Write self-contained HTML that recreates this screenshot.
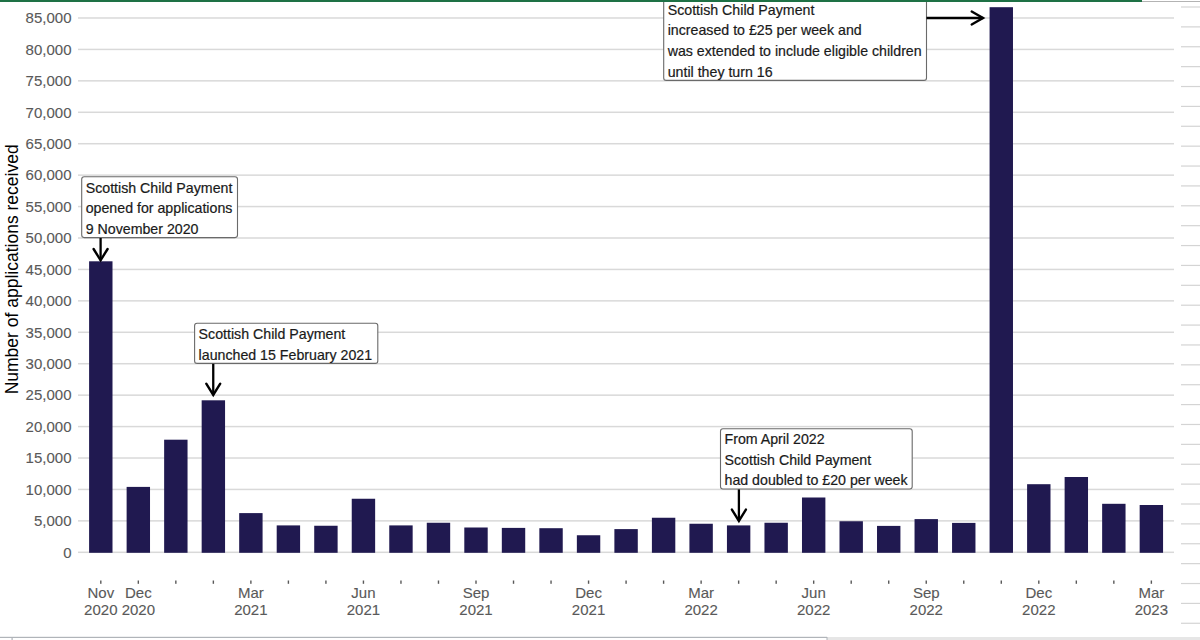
<!DOCTYPE html><html><head><meta charset="utf-8"><style>html,body{margin:0;padding:0;background:#fff;overflow:hidden}svg{display:block}text{font-family:"Liberation Sans",sans-serif}</style></head><body>
<svg width="1200" height="640" viewBox="0 0 1200 640">
<rect x="0" y="0" width="1200" height="640" fill="#fff"/>
<rect x="1181" y="6.40" width="19" height="1.2" fill="#d4d4d4"/>
<rect x="1181" y="26.28" width="19" height="1.2" fill="#d4d4d4"/>
<rect x="1181" y="46.16" width="19" height="1.2" fill="#d4d4d4"/>
<rect x="1181" y="66.04" width="19" height="1.2" fill="#d4d4d4"/>
<rect x="1181" y="85.92" width="19" height="1.2" fill="#d4d4d4"/>
<rect x="1181" y="105.80" width="19" height="1.2" fill="#d4d4d4"/>
<rect x="1181" y="125.68" width="19" height="1.2" fill="#d4d4d4"/>
<rect x="1181" y="145.56" width="19" height="1.2" fill="#d4d4d4"/>
<rect x="1181" y="165.44" width="19" height="1.2" fill="#d4d4d4"/>
<rect x="1181" y="185.32" width="19" height="1.2" fill="#d4d4d4"/>
<rect x="1181" y="205.20" width="19" height="1.2" fill="#d4d4d4"/>
<rect x="1181" y="225.08" width="19" height="1.2" fill="#d4d4d4"/>
<rect x="1181" y="244.96" width="19" height="1.2" fill="#d4d4d4"/>
<rect x="1181" y="264.84" width="19" height="1.2" fill="#d4d4d4"/>
<rect x="1181" y="284.72" width="19" height="1.2" fill="#d4d4d4"/>
<rect x="1181" y="304.60" width="19" height="1.2" fill="#d4d4d4"/>
<rect x="1181" y="324.48" width="19" height="1.2" fill="#d4d4d4"/>
<rect x="1181" y="344.36" width="19" height="1.2" fill="#d4d4d4"/>
<rect x="1181" y="364.24" width="19" height="1.2" fill="#d4d4d4"/>
<rect x="1181" y="384.12" width="19" height="1.2" fill="#d4d4d4"/>
<rect x="1181" y="404.00" width="19" height="1.2" fill="#d4d4d4"/>
<rect x="1181" y="423.88" width="19" height="1.2" fill="#d4d4d4"/>
<rect x="1181" y="443.76" width="19" height="1.2" fill="#d4d4d4"/>
<rect x="1181" y="463.64" width="19" height="1.2" fill="#d4d4d4"/>
<rect x="1181" y="483.52" width="19" height="1.2" fill="#d4d4d4"/>
<rect x="1181" y="503.40" width="19" height="1.2" fill="#d4d4d4"/>
<rect x="1181" y="523.28" width="19" height="1.2" fill="#d4d4d4"/>
<rect x="1181" y="543.16" width="19" height="1.2" fill="#d4d4d4"/>
<rect x="1181" y="563.04" width="19" height="1.2" fill="#d4d4d4"/>
<rect x="1181" y="582.92" width="19" height="1.2" fill="#d4d4d4"/>
<rect x="1181" y="602.80" width="19" height="1.2" fill="#d4d4d4"/>
<rect x="1181" y="622.68" width="19" height="1.2" fill="#d4d4d4"/>
<rect x="78" y="551.55" width="1096" height="1.5" fill="#d9d9d9"/>
<rect x="78" y="520.12" width="1096" height="1.5" fill="#d9d9d9"/>
<rect x="78" y="488.69" width="1096" height="1.5" fill="#d9d9d9"/>
<rect x="78" y="457.26" width="1096" height="1.5" fill="#d9d9d9"/>
<rect x="78" y="425.83" width="1096" height="1.5" fill="#d9d9d9"/>
<rect x="78" y="394.40" width="1096" height="1.5" fill="#d9d9d9"/>
<rect x="78" y="362.97" width="1096" height="1.5" fill="#d9d9d9"/>
<rect x="78" y="331.54" width="1096" height="1.5" fill="#d9d9d9"/>
<rect x="78" y="300.11" width="1096" height="1.5" fill="#d9d9d9"/>
<rect x="78" y="268.68" width="1096" height="1.5" fill="#d9d9d9"/>
<rect x="78" y="237.25" width="1096" height="1.5" fill="#d9d9d9"/>
<rect x="78" y="205.82" width="1096" height="1.5" fill="#d9d9d9"/>
<rect x="78" y="174.39" width="1096" height="1.5" fill="#d9d9d9"/>
<rect x="78" y="142.96" width="1096" height="1.5" fill="#d9d9d9"/>
<rect x="78" y="111.53" width="1096" height="1.5" fill="#d9d9d9"/>
<rect x="78" y="80.10" width="1096" height="1.5" fill="#d9d9d9"/>
<rect x="78" y="48.67" width="1096" height="1.5" fill="#d9d9d9"/>
<rect x="78" y="17.24" width="1096" height="1.5" fill="#d9d9d9"/>
<text x="71.5" y="557.60" font-size="15" fill="#595959" stroke="#595959" stroke-width="0.12" text-anchor="end">0</text>
<text x="71.5" y="526.17" font-size="15" fill="#595959" stroke="#595959" stroke-width="0.12" text-anchor="end">5,000</text>
<text x="71.5" y="494.74" font-size="15" fill="#595959" stroke="#595959" stroke-width="0.12" text-anchor="end">10,000</text>
<text x="71.5" y="463.31" font-size="15" fill="#595959" stroke="#595959" stroke-width="0.12" text-anchor="end">15,000</text>
<text x="71.5" y="431.88" font-size="15" fill="#595959" stroke="#595959" stroke-width="0.12" text-anchor="end">20,000</text>
<text x="71.5" y="400.45" font-size="15" fill="#595959" stroke="#595959" stroke-width="0.12" text-anchor="end">25,000</text>
<text x="71.5" y="369.02" font-size="15" fill="#595959" stroke="#595959" stroke-width="0.12" text-anchor="end">30,000</text>
<text x="71.5" y="337.59" font-size="15" fill="#595959" stroke="#595959" stroke-width="0.12" text-anchor="end">35,000</text>
<text x="71.5" y="306.16" font-size="15" fill="#595959" stroke="#595959" stroke-width="0.12" text-anchor="end">40,000</text>
<text x="71.5" y="274.73" font-size="15" fill="#595959" stroke="#595959" stroke-width="0.12" text-anchor="end">45,000</text>
<text x="71.5" y="243.30" font-size="15" fill="#595959" stroke="#595959" stroke-width="0.12" text-anchor="end">50,000</text>
<text x="71.5" y="211.87" font-size="15" fill="#595959" stroke="#595959" stroke-width="0.12" text-anchor="end">55,000</text>
<text x="71.5" y="180.44" font-size="15" fill="#595959" stroke="#595959" stroke-width="0.12" text-anchor="end">60,000</text>
<text x="71.5" y="149.01" font-size="15" fill="#595959" stroke="#595959" stroke-width="0.12" text-anchor="end">65,000</text>
<text x="71.5" y="117.58" font-size="15" fill="#595959" stroke="#595959" stroke-width="0.12" text-anchor="end">70,000</text>
<text x="71.5" y="86.15" font-size="15" fill="#595959" stroke="#595959" stroke-width="0.12" text-anchor="end">75,000</text>
<text x="71.5" y="54.72" font-size="15" fill="#595959" stroke="#595959" stroke-width="0.12" text-anchor="end">80,000</text>
<text x="71.5" y="23.29" font-size="15" fill="#595959" stroke="#595959" stroke-width="0.12" text-anchor="end">85,000</text>
<text transform="translate(18,269.35) rotate(-90)" x="0" y="0" font-size="17.5" fill="#000" text-anchor="middle">Number of applications received</text>
<rect x="89.10" y="261.30" width="23.4" height="291.50" fill="#201950"/>
<rect x="126.62" y="486.90" width="23.4" height="65.90" fill="#201950"/>
<rect x="164.14" y="439.70" width="23.4" height="113.10" fill="#201950"/>
<rect x="201.66" y="400.30" width="23.4" height="152.50" fill="#201950"/>
<rect x="239.18" y="513.10" width="23.4" height="39.70" fill="#201950"/>
<rect x="276.70" y="525.40" width="23.4" height="27.40" fill="#201950"/>
<rect x="314.22" y="525.75" width="23.4" height="27.05" fill="#201950"/>
<rect x="351.74" y="498.75" width="23.4" height="54.05" fill="#201950"/>
<rect x="389.26" y="525.40" width="23.4" height="27.40" fill="#201950"/>
<rect x="426.78" y="522.75" width="23.4" height="30.05" fill="#201950"/>
<rect x="464.30" y="527.50" width="23.4" height="25.30" fill="#201950"/>
<rect x="501.82" y="527.90" width="23.4" height="24.90" fill="#201950"/>
<rect x="539.34" y="528.20" width="23.4" height="24.60" fill="#201950"/>
<rect x="576.86" y="535.25" width="23.4" height="17.55" fill="#201950"/>
<rect x="614.38" y="529.10" width="23.4" height="23.70" fill="#201950"/>
<rect x="651.90" y="517.75" width="23.4" height="35.05" fill="#201950"/>
<rect x="689.42" y="523.75" width="23.4" height="29.05" fill="#201950"/>
<rect x="726.94" y="525.40" width="23.4" height="27.40" fill="#201950"/>
<rect x="764.46" y="522.75" width="23.4" height="30.05" fill="#201950"/>
<rect x="801.98" y="497.50" width="23.4" height="55.30" fill="#201950"/>
<rect x="839.50" y="521.25" width="23.4" height="31.55" fill="#201950"/>
<rect x="877.02" y="525.90" width="23.4" height="26.90" fill="#201950"/>
<rect x="914.54" y="519.10" width="23.4" height="33.70" fill="#201950"/>
<rect x="952.06" y="522.90" width="23.4" height="29.90" fill="#201950"/>
<rect x="989.58" y="7.20" width="23.4" height="545.60" fill="#201950"/>
<rect x="1027.10" y="484.20" width="23.4" height="68.60" fill="#201950"/>
<rect x="1064.62" y="477.00" width="23.4" height="75.80" fill="#201950"/>
<rect x="1102.14" y="503.80" width="23.4" height="49.00" fill="#201950"/>
<rect x="1139.66" y="505.00" width="23.4" height="47.80" fill="#201950"/>
<rect x="100.10" y="580.5" width="1.4" height="3.3" fill="#595959"/>
<rect x="137.62" y="580.5" width="1.4" height="3.3" fill="#595959"/>
<rect x="175.14" y="580.5" width="1.4" height="3.3" fill="#595959"/>
<rect x="212.66" y="580.5" width="1.4" height="3.3" fill="#595959"/>
<rect x="250.18" y="580.5" width="1.4" height="3.3" fill="#595959"/>
<rect x="287.70" y="580.5" width="1.4" height="3.3" fill="#595959"/>
<rect x="325.22" y="580.5" width="1.4" height="3.3" fill="#595959"/>
<rect x="362.74" y="580.5" width="1.4" height="3.3" fill="#595959"/>
<rect x="400.26" y="580.5" width="1.4" height="3.3" fill="#595959"/>
<rect x="437.78" y="580.5" width="1.4" height="3.3" fill="#595959"/>
<rect x="475.30" y="580.5" width="1.4" height="3.3" fill="#595959"/>
<rect x="512.82" y="580.5" width="1.4" height="3.3" fill="#595959"/>
<rect x="550.34" y="580.5" width="1.4" height="3.3" fill="#595959"/>
<rect x="587.86" y="580.5" width="1.4" height="3.3" fill="#595959"/>
<rect x="625.38" y="580.5" width="1.4" height="3.3" fill="#595959"/>
<rect x="662.90" y="580.5" width="1.4" height="3.3" fill="#595959"/>
<rect x="700.42" y="580.5" width="1.4" height="3.3" fill="#595959"/>
<rect x="737.94" y="580.5" width="1.4" height="3.3" fill="#595959"/>
<rect x="775.46" y="580.5" width="1.4" height="3.3" fill="#595959"/>
<rect x="812.98" y="580.5" width="1.4" height="3.3" fill="#595959"/>
<rect x="850.50" y="580.5" width="1.4" height="3.3" fill="#595959"/>
<rect x="888.02" y="580.5" width="1.4" height="3.3" fill="#595959"/>
<rect x="925.54" y="580.5" width="1.4" height="3.3" fill="#595959"/>
<rect x="963.06" y="580.5" width="1.4" height="3.3" fill="#595959"/>
<rect x="1000.58" y="580.5" width="1.4" height="3.3" fill="#595959"/>
<rect x="1038.10" y="580.5" width="1.4" height="3.3" fill="#595959"/>
<rect x="1075.62" y="580.5" width="1.4" height="3.3" fill="#595959"/>
<rect x="1113.14" y="580.5" width="1.4" height="3.3" fill="#595959"/>
<rect x="1150.66" y="580.5" width="1.4" height="3.3" fill="#595959"/>
<text x="100.80" y="598.2" font-size="15" fill="#595959" stroke="#595959" stroke-width="0.12" text-anchor="middle">Nov</text>
<text x="100.80" y="614.8" font-size="15" fill="#595959" stroke="#595959" stroke-width="0.12" text-anchor="middle">2020</text>
<text x="138.32" y="598.2" font-size="15" fill="#595959" stroke="#595959" stroke-width="0.12" text-anchor="middle">Dec</text>
<text x="138.32" y="614.8" font-size="15" fill="#595959" stroke="#595959" stroke-width="0.12" text-anchor="middle">2020</text>
<text x="250.88" y="598.2" font-size="15" fill="#595959" stroke="#595959" stroke-width="0.12" text-anchor="middle">Mar</text>
<text x="250.88" y="614.8" font-size="15" fill="#595959" stroke="#595959" stroke-width="0.12" text-anchor="middle">2021</text>
<text x="363.44" y="598.2" font-size="15" fill="#595959" stroke="#595959" stroke-width="0.12" text-anchor="middle">Jun</text>
<text x="363.44" y="614.8" font-size="15" fill="#595959" stroke="#595959" stroke-width="0.12" text-anchor="middle">2021</text>
<text x="476.00" y="598.2" font-size="15" fill="#595959" stroke="#595959" stroke-width="0.12" text-anchor="middle">Sep</text>
<text x="476.00" y="614.8" font-size="15" fill="#595959" stroke="#595959" stroke-width="0.12" text-anchor="middle">2021</text>
<text x="588.56" y="598.2" font-size="15" fill="#595959" stroke="#595959" stroke-width="0.12" text-anchor="middle">Dec</text>
<text x="588.56" y="614.8" font-size="15" fill="#595959" stroke="#595959" stroke-width="0.12" text-anchor="middle">2021</text>
<text x="701.12" y="598.2" font-size="15" fill="#595959" stroke="#595959" stroke-width="0.12" text-anchor="middle">Mar</text>
<text x="701.12" y="614.8" font-size="15" fill="#595959" stroke="#595959" stroke-width="0.12" text-anchor="middle">2022</text>
<text x="813.68" y="598.2" font-size="15" fill="#595959" stroke="#595959" stroke-width="0.12" text-anchor="middle">Jun</text>
<text x="813.68" y="614.8" font-size="15" fill="#595959" stroke="#595959" stroke-width="0.12" text-anchor="middle">2022</text>
<text x="926.24" y="598.2" font-size="15" fill="#595959" stroke="#595959" stroke-width="0.12" text-anchor="middle">Sep</text>
<text x="926.24" y="614.8" font-size="15" fill="#595959" stroke="#595959" stroke-width="0.12" text-anchor="middle">2022</text>
<text x="1038.80" y="598.2" font-size="15" fill="#595959" stroke="#595959" stroke-width="0.12" text-anchor="middle">Dec</text>
<text x="1038.80" y="614.8" font-size="15" fill="#595959" stroke="#595959" stroke-width="0.12" text-anchor="middle">2022</text>
<text x="1151.36" y="598.2" font-size="15" fill="#595959" stroke="#595959" stroke-width="0.12" text-anchor="middle">Mar</text>
<text x="1151.36" y="614.8" font-size="15" fill="#595959" stroke="#595959" stroke-width="0.12" text-anchor="middle">2023</text>
<rect x="81.70" y="176.70" width="155.80" height="60.90" rx="2.5" ry="2.5" fill="#fff" stroke="#6a6a6a" stroke-width="1.1"/>
<text x="85.70" y="192.70" font-size="14.2" fill="#1a1a1a" stroke="#1a1a1a" stroke-width="0.2">Scottish Child Payment</text>
<text x="85.70" y="213.40" font-size="14.2" fill="#1a1a1a" stroke="#1a1a1a" stroke-width="0.2">opened for applications</text>
<text x="85.70" y="234.10" font-size="14.2" fill="#1a1a1a" stroke="#1a1a1a" stroke-width="0.2">9 November 2020</text>
<rect x="194.60" y="323.30" width="183.20" height="40.10" rx="2.5" ry="2.5" fill="#fff" stroke="#6a6a6a" stroke-width="1.1"/>
<text x="198.60" y="339.05" font-size="14.2" fill="#1a1a1a" stroke="#1a1a1a" stroke-width="0.2">Scottish Child Payment</text>
<text x="198.60" y="359.70" font-size="14.2" fill="#1a1a1a" stroke="#1a1a1a" stroke-width="0.2">launched 15 February 2021</text>
<rect x="720.50" y="428.75" width="191.70" height="60.25" rx="2.5" ry="2.5" fill="#fff" stroke="#6a6a6a" stroke-width="1.1"/>
<text x="724.50" y="444.00" font-size="14.2" fill="#1a1a1a" stroke="#1a1a1a" stroke-width="0.2">From April 2022</text>
<text x="724.50" y="464.60" font-size="14.2" fill="#1a1a1a" stroke="#1a1a1a" stroke-width="0.2">Scottish Child Payment</text>
<text x="724.50" y="485.25" font-size="14.2" fill="#1a1a1a" stroke="#1a1a1a" stroke-width="0.2">had doubled to £20 per week</text>
<rect x="663.70" y="-1.40" width="262.80" height="81.80" rx="2.5" ry="2.5" fill="#fff" stroke="#6a6a6a" stroke-width="1.1"/>
<text x="667.70" y="14.50" font-size="14.2" fill="#1a1a1a" stroke="#1a1a1a" stroke-width="0.2">Scottish Child Payment</text>
<text x="667.70" y="34.90" font-size="14.2" fill="#1a1a1a" stroke="#1a1a1a" stroke-width="0.2">increased to £25 per week and</text>
<text x="667.70" y="55.60" font-size="14.2" fill="#1a1a1a" stroke="#1a1a1a" stroke-width="0.2">was extended to include eligible children</text>
<text x="667.70" y="76.65" font-size="14.2" fill="#1a1a1a" stroke="#1a1a1a" stroke-width="0.2">until they turn 16</text>
<line x1="100.6" y1="238.0" x2="100.6" y2="260.5" stroke="#000" stroke-width="2.3"/>
<polyline points="93.6,249.0 100.6,260.3 107.6,249.0" fill="none" stroke="#000" stroke-width="2.4" stroke-linecap="round" stroke-linejoin="miter"/>
<line x1="213.25" y1="363.8" x2="213.25" y2="395.2" stroke="#000" stroke-width="2.3"/>
<polyline points="206.25,383.7 213.25,395.0 220.25,383.7" fill="none" stroke="#000" stroke-width="2.4" stroke-linecap="round" stroke-linejoin="miter"/>
<line x1="738.9" y1="489.4" x2="738.9" y2="521.1" stroke="#000" stroke-width="2.3"/>
<polyline points="731.9,509.59999999999997 738.9,520.9 745.9,509.59999999999997" fill="none" stroke="#000" stroke-width="2.4" stroke-linecap="round" stroke-linejoin="miter"/>
<line x1="926.5" y1="18" x2="983.2" y2="18" stroke="#000" stroke-width="2.3"/>
<polyline points="971.7,11.5 983,18 971.7,24.5" fill="none" stroke="#000" stroke-width="2.4" stroke-linecap="round" stroke-linejoin="miter"/>
<rect x="0" y="0" width="1142" height="2" fill="#1e7145"/>
<rect x="1142" y="1" width="58" height="1" fill="#b3b3b3"/>
<rect x="0" y="636.8" width="827" height="1.2" fill="#b0b4b9"/>
<rect x="827" y="637" width="373" height="3" fill="#e6e6e6"/>
<rect x="826.5" y="637" width="1" height="3" fill="#b0b4b9"/>
<rect x="11.5" y="637" width="1.2" height="3" fill="#b0b4b9"/>
</svg></body></html>
